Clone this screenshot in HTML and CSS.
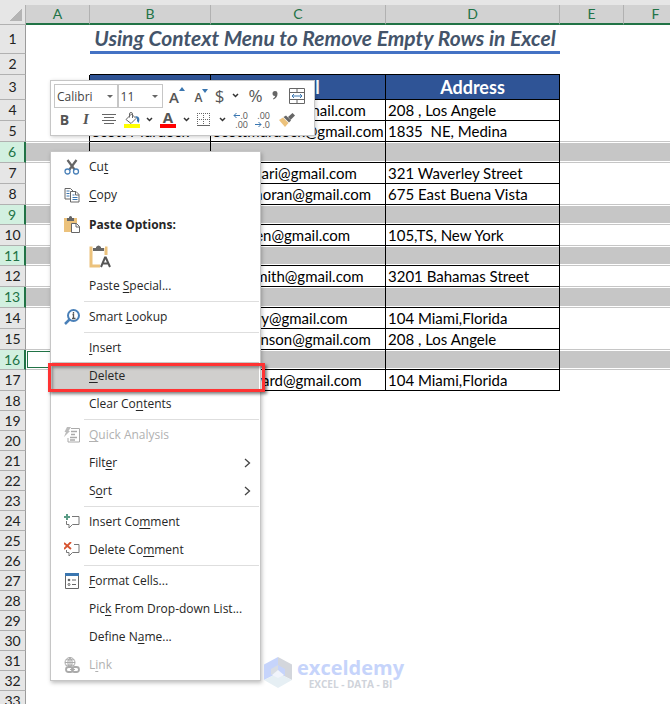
FILE: index.html
```html
<!DOCTYPE html>
<html lang="en">
  <head>
    <meta charset="utf-8">
    <title>Using Context Menu to Remove Empty Rows in Excel</title>
    <link rel="stylesheet" href="styles.css">
  </head>
  <body>
    <table class="sheet">
      <colgroup>
        <col class="col-head"><col class="col-a"><col class="col-b"><col class="col-c">
        <col class="col-d"><col class="col-e"><col class="col-f"><col>
      </colgroup>
      <thead>
        <tr><th class="corner"></th><th>A</th><th>B</th><th>C</th><th>D</th><th>E</th><th>F</th><th></th></tr>
      </thead>
      <tbody>
        <tr class="r29"><th>1</th><td></td><td class="title" colspan="3">Using Context Menu to Remove Empty Rows in Excel</td><td></td><td></td><td></td></tr>
        <tr class="r21 top"><th>2</th><td></td><td></td><td></td><td></td><td></td><td></td><td></td></tr>
        <tr class="r25 data heading"><th>3</th><td></td><td></td><td>Email</td><td>Address</td><td></td><td></td><td></td></tr>
        <tr class="r21 data"><th>4</th><td></td><td></td><td>jacobhallen@gmail.com</td><td>208 , Los Angele</td><td></td><td></td><td></td></tr>
        <tr class="r21 data"><th>5</th><td></td><td>Scott Murdock</td><td>Scottmurdock@gmail.com</td><td>1835&nbsp; NE, Medina</td><td></td><td></td><td></td></tr>
        <tr class="r21 data picked"><th>6</th><td></td><td></td><td></td><td></td><td></td><td></td><td></td></tr>
        <tr class="r21 data"><th>7</th><td></td><td></td><td>alexansari@gmail.com</td><td>321 Waverley Street</td><td></td><td></td><td></td></tr>
        <tr class="r21 data"><th>8</th><td></td><td></td><td>jackiemoran@gmail.com</td><td>675 East Buena Vista</td><td></td><td></td><td></td></tr>
        <tr class="r20 data picked"><th>9</th><td></td><td></td><td></td><td></td><td></td><td></td><td></td></tr>
        <tr class="r21 data"><th>10</th><td></td><td></td><td>timgreen@gmail.com</td><td>105,TS, New York</td><td></td><td></td><td></td></tr>
        <tr class="r20 data picked"><th>11</th><td></td><td></td><td></td><td></td><td></td><td></td><td></td></tr>
        <tr class="r21 data"><th>12</th><td></td><td></td><td>adamsmith@gmail.com</td><td>3201 Bahamas Street</td><td></td><td></td><td></td></tr>
        <tr class="r21 data picked"><th>13</th><td></td><td></td><td></td><td></td><td></td><td></td><td></td></tr>
        <tr class="r21 data"><th>14</th><td></td><td></td><td>hallmary@gmail.com</td><td>104 Miami,Florida</td><td></td><td></td><td></td></tr>
        <tr class="r21 data"><th>15</th><td></td><td></td><td>lukejohnson@gmail.com</td><td>208 , Los Angele</td><td></td><td></td><td></td></tr>
        <tr class="r20 data picked"><th>16</th><td class="active"></td><td></td><td></td><td></td><td></td><td></td><td></td></tr>
        <tr class="r21 data"><th>17</th><td></td><td></td><td>jonhoward@gmail.com</td><td>104 Miami,Florida</td><td></td><td></td><td></td></tr>
        <tr class="r20"><th>18</th><td colspan="7"></td></tr>
        <tr class="r20"><th>19</th><td colspan="7"></td></tr>
        <tr class="r20"><th>20</th><td colspan="7"></td></tr>
        <tr class="r20"><th>21</th><td colspan="7"></td></tr>
        <tr class="r20"><th>22</th><td colspan="7"></td></tr>
        <tr class="r20"><th>23</th><td colspan="7"></td></tr>
        <tr class="r20"><th>24</th><td colspan="7"></td></tr>
        <tr class="r20"><th>25</th><td colspan="7"></td></tr>
        <tr class="r20"><th>26</th><td colspan="7"></td></tr>
        <tr class="r20"><th>27</th><td colspan="7"></td></tr>
        <tr class="r20"><th>28</th><td colspan="7"></td></tr>
        <tr class="r20"><th>29</th><td colspan="7"></td></tr>
        <tr class="r20"><th>30</th><td colspan="7"></td></tr>
        <tr class="r20"><th>31</th><td colspan="7"></td></tr>
        <tr class="r20"><th>32</th><td colspan="7"></td></tr>
        <tr class="r20"><th>33</th><td colspan="7"></td></tr>
      </tbody>
    </table>

    <!-- floating format bar -->
    <div class="toolbar">
      <div class="tools">
        <label class="drop font"><select aria-label="Font"><option>Calibri</option></select></label>
        <label class="drop size"><select aria-label="Font size"><option>11</option></select></label>
        <button class="w28 grow" aria-label="Increase font size">A<svg width="6" height="4"><path d="M0 4L3 0L6 4z" fill="#3a76b0"/></svg></button>
        <button class="w21 shrink" aria-label="Decrease font size">A<svg width="6" height="4"><path d="M0 0H6L3 4z" fill="#3a76b0"/></svg></button>
        <button class="w16 sign">$</button>
        <button class="w16" aria-label="Currency list"><svg width="7" height="5"><path class="chev" d="M1 1l2.500 2.500L6 1"/></svg></button>
        <button class="w24 sign">%</button>
        <button class="w16" aria-label="Comma style"><svg width="6" height="9"><path d="M3 0a2.500 2.500 0 0 1 2.500 2.700C5.500 5.500 4 7.500 1.500 8.500L1 7.500C2.500 6.800 3 6 3 5A2.500 2.500 0 0 1 3 0z" fill="#666"/></svg></button>
        <button class="w28" aria-label="Merge and center"><svg width="16" height="16" fill="none" stroke="#666"><path d="M.5 .5h15v15H.5zM.5 4.500h15M.5 11.500h15M8 .5v4M8 11.500v4"/><path d="M3 8h10M5 6L3 8l2 2M11 6l2 2-2 2" stroke="#3a76b0"/></svg></button>
      </div>
      <div class="tools">
        <button class="w21 bold">B</button>
        <button class="w22 italic">I</button>
        <button class="w24" aria-label="Center"><svg width="14" height="11" stroke="#666"><path d="M0 .5h14M2 3.500h10M0 6.500h14M2 9.500h10"/></svg></button>
        <button class="w22" aria-label="Fill color"><svg width="17" height="16" fill="none"><path d="M2 7.500L7.500 2 12 6.500 7 11.500z" fill="#fff" stroke="#666"/><path d="M5.500 5.500V2Q5.500 .5 7 .5T8.500 2V6" stroke="#666"/><path d="M11 4.500C15 3.500 16.500 7 14.500 11L13 9V6.500z" fill="#3a76b0"/><path d="M0 12h16v4H0z" fill="#ff0"/></svg></button>
        <button class="w13" aria-label="Fill colors"><svg width="7" height="5"><path class="chev" d="M1 1l2.500 2.500L6 1"/></svg></button>
        <button class="fontcolor" aria-label="Font color">A</button>
        <button class="w12" aria-label="Font colors"><svg width="7" height="5"><path class="chev" d="M1 1l2.500 2.500L6 1"/></svg></button>
        <button class="w24" aria-label="Borders"><svg width="14" height="14" fill="none" stroke="#666"><path d="M0 .5h13M0 6.500h13M.5 0v13M6.500 0v13M12.500 0v13" stroke-dasharray="1 1"/><path d="M0 12.500h13"/></svg></button>
        <button class="w13" aria-label="Border list"><svg width="7" height="5"><path class="chev" d="M1 1l2.500 2.500L6 1"/></svg></button>
        <button class="w24 decimal" aria-label="Increase decimal"><span><svg width="7" height="7"><path class="arrow" d="M7 3.500H1M3.500 1L1 3.500 3.500 6"/></svg>.0</span><span>.00</span></button>
        <button class="w22 decimal" aria-label="Decrease decimal"><span>.00</span><span><svg width="7" height="7"><path class="arrow" d="M0 3.500h6M3.500 1L6 3.500 3.500 6"/></svg>.0</span></button>
        <button class="w24" aria-label="Format painter"><svg width="16" height="14"><path d="M0 7L4 4.500 9.500 10 6 14z" fill="#ecc27c"/><path d="M4.500 4L7 2.500l5 5L10 9.500z" fill="#666"/><path d="M9 4l4.500-4L16 2.500 11.500 7z" fill="#666"/></svg></button>
      </div>
    </div>

    <!-- right click menu -->
    <div class="menu" role="menu">
      <button role="menuitem"><svg width="16" height="16" fill="none"><path d="M3.500 1L10.500 10.500M12.500 1L5.500 10.500" stroke="#666" stroke-width="2.200"/><circle cx="3.500" cy="12.500" r="2.500" stroke="#4a80b8" stroke-width="1.300"/><circle cx="12" cy="12.500" r="2.500" stroke="#4a80b8" stroke-width="1.300"/></svg><span>Cu<u>t</u></span></button>
      <button role="menuitem"><svg width="16" height="16" fill="none"><path d="M8 12H1V1.500h5.500L9 4" stroke="#666"/><path d="M2.500 4h3M2.500 6.500h3M2.500 9h3" stroke="#3a76b0"/><path d="M6.500 4.500h5.500l3 3v7.500H6.500z" fill="#fff" stroke="#666"/><path d="M11.500 4.500v3.500H15" stroke="#666"/><path d="M8.500 8h2M8.500 10.500h5M8.500 12.500h5" stroke="#3a76b0"/></svg><span><u>C</u>opy</span></button>
      <div class="caption"><svg width="16" height="17" fill="none"><path d="M0 2h13v14H0z" fill="#ecc27c"/><path d="M3 2h2V1q1.500-2 3 0v1h2v3H3z" fill="#666"/><path d="M7.500 7.500h5l3 3v6h-8z" fill="#fff" stroke="#666"/><path d="M12 7.500v3.500h3.500" stroke="#666"/></svg><span>Paste Options:</span></div>
      <button role="menuitem" class="paste" aria-label="Paste"><svg width="22" height="23" fill="none"><path d="M3.500 3H2v18h9M16 3h1v7" stroke="#ecc27c" stroke-width="3"/><path d="M4 3h3V2q2.500-3 5 0v1h3v3H4z" fill="#666"/><path d="M12 22L16 12.500h.8L21 22M13.500 18.500h6" stroke="#555" stroke-width="2"/></svg></button>
      <button role="menuitem"><i></i><span>Paste <u>S</u>pecial...</span></button>
      <hr>
      <button role="menuitem"><svg width="16" height="16" fill="none"><circle cx="9.500" cy="6.500" r="5.500" stroke="#4a80b8" stroke-width="2"/><path d="M5.500 10.500L1 15" stroke="#4a80b8" stroke-width="2.500"/><path d="M9.500 3v1.500M8.500 5.500h1V9M8 9.500h3.500" stroke="#555" stroke-width="1.300"/></svg><span>Smart <u>L</u>ookup</span></button>
      <hr>
      <button role="menuitem"><i></i><span><u>I</u>nsert</span></button>
      <button role="menuitem" class="hover"><i></i><span><u>D</u>elete</span></button>
      <button role="menuitem"><i></i><span>Clear Co<u>n</u>tents</span></button>
      <hr>
      <button role="menuitem" disabled><svg width="16" height="16" fill="none" stroke="#aaa"><path d="M7 1.500h8.500V15H4v-4"/><path d="M7 4.500h6M7 7.500h4M6 10.500h7M6 13h5" stroke-width="1.500"/><path d="M3 0h4L4.500 4H6L0 10l2-5H.5z" fill="#bbb" stroke="none"/></svg><span><u>Q</u>uick Analysis</span></button>
      <button role="menuitem"><i></i><span>Filt<u>e</u>r</span><svg width="7" height="10"><path class="more" d="M1 1l4.500 4L1 9"/></svg></button>
      <button role="menuitem"><i></i><span>S<u>o</u>rt</span><svg width="7" height="10"><path class="more" d="M1 1l4.500 4L1 9"/></svg></button>
      <hr>
      <button role="menuitem"><svg width="16" height="16" fill="none"><path d="M8 2.500h7v8H8.500L5 14v-3.500H2.500V7" stroke="#777"/><path d="M3 0v6M0 3h6" stroke="#5a9c86" stroke-width="2"/></svg><span>Insert Co<u>m</u>ment</span></button>
      <button role="menuitem"><svg width="16" height="16" fill="none"><path d="M10 2.500h5v8H8.500L5 14v-3.500H2.500V8" stroke="#777"/><path d="M0 1l7 6M7 0L0 7" stroke="#d6532f" stroke-width="1.800"/></svg><span>Delete Co<u>m</u>ment</span></button>
      <hr>
      <button role="menuitem"><svg width="16" height="16" fill="none"><path d="M1.500 .5h13v15h-13z" stroke="#666"/><path d="M1 0h14v3H1z" fill="#3a76b0"/><circle cx="5" cy="7" r="1.300" fill="#666"/><circle cx="5" cy="11.500" r="1" stroke="#666"/><path d="M8 7h4M8 11.500h4" stroke="#666"/></svg><span><u>F</u>ormat Cells...</span></button>
      <button role="menuitem"><i></i><span>Pic<u>k</u> From Drop-down List...</span></button>
      <button role="menuitem"><i></i><span>Define N<u>a</u>me...</span></button>
      <button role="menuitem" disabled><svg width="16" height="16" fill="none" stroke="#aaa"><circle cx="6" cy="5.500" r="5"/><path d="M1 5.500h10M2 2.800h8M2 8.200h8M6 .5v10M6 .5q-4.500 5 0 10M6 .5q4.500 5 0 10"/><path d="M1 9h15v7H1z" fill="#fff" stroke="none"/><rect x="2" y="10" width="7" height="5" rx="2.500" stroke-width="1.800"/><rect x="8" y="10" width="7" height="5" rx="2.500" stroke-width="1.800"/><path d="M6 12.500h5"/></svg><span>L<u>i</u>nk</span></button>
    </div>

    <div class="marker"></div>

    <div class="brand">
      <svg width="28" height="32"><path d="M14 0L28 7.500V23L14 16z" fill="#d3d6dc"/><path d="M14 0L0 7.500V23l14-7z" fill="#c6d4fb"/><path d="M0 23l14-7 14 7-14 8z" fill="#e6eff4"/><path d="M14 8l7 4v7l-7-3z" fill="#c6d4fb"/><path d="M14 8l-7 4v6l7-3z" fill="#d9dde3"/><path d="M8 18l6-5 6 5-6 3z" fill="#f1f4fb"/></svg>
      <div>
        <b>exceldemy</b>
        <small>EXCEL - DATA - BI</small>
      </div>
    </div>
  </body>
</html>
```
FILE: styles.css
```css
* {
  box-sizing: border-box;
}
body {
  margin: 0;
  padding-top: 5px;
  height: 100vh;
  overflow: hidden;
  position: relative;
  background: linear-gradient(#e6e6e6 5px, #fff 5px);
  font-family: Lato, "Liberation Sans", sans-serif;
  font-variant-ligatures: none;
}

/* worksheet */
.sheet {
  width: 100%;
  min-width: 688px;
  table-layout: fixed;
  border-spacing: 0;
  font-size: 15px;
  line-height: 18px;
}
.col-head { width: 26px; }
.col-a { width: 64px; }
.col-b { width: 121px; }
.col-c { width: 175px; }
.col-d { width: 174px; }
.col-e { width: 64px; }
.col-f { width: 64px; }
th, td {
  padding: 0;
  white-space: nowrap;
  overflow: hidden;
}
thead th {
  height: 20px;
  background: #d2d2d2;
  border-right: 1px solid #b1b1b1;
  border-bottom: 2px solid #217346;
  color: #217346;
  font-size: 14px;
  font-weight: normal;
}
thead .corner {
  background: linear-gradient(135deg, transparent 50%, #b4b4b4 50%) 10px 4px / 12px 12px no-repeat #e6e6e6;
  border-bottom: 1px solid #b1b1b1;
}
tbody th {
  background: #e6e6e6;
  border-right: 1px solid #9b9b9b;
  border-bottom: 1px solid #b1b1b1;
  color: #222;
  font-size: 14px;
  font-weight: normal;
}
.r20 { height: 20px; }
.r21 { height: 21px; }
.r25 { height: 25px; }
.r29 { height: 29px; }
.title {
  border-bottom: 3px solid #4472c4;
  color: #44546a;
  font-size: 21px;
  font-weight: bold;
  font-style: italic;
  line-height: 24px;
  text-align: center;
}
.top td:nth-child(n+3):nth-child(-n+5) {
  border-bottom: 1px solid #000;
}
.data td:nth-child(2) {
  border-right: 1px solid #000;
}
.data td:nth-child(n+3):nth-child(-n+5) {
  padding-left: 2px;
  border-right: 1px solid #000;
  border-bottom: 1px solid #000;
}
.heading td:nth-child(n+3):nth-child(-n+5) {
  padding: 0;
  background: #2f5496;
  color: #fff;
  font-size: 18px;
  font-weight: bold;
  text-align: center;
}
.data:has(+ .picked) td,
.picked td {
  border-bottom: 1px solid #c6c6c6;
}
.picked td {
  background: #c6c6c6;
  box-shadow: inset 0 1px #fff, inset 0 -1px #fff;
}
.picked th {
  background: #d2f0e0;
  border-right: 2px solid #217346;
  color: #217346;
}
.picked .active {
  background: #fff;
  box-shadow: inset 0 0 0 1px #fff, inset 0 0 0 2px #217346;
}

/* floating format bar */
button {
  padding: 0;
  border: 0;
  background: none;
  color: #555;
  font: 12px "Open Sans", sans-serif;
}
.toolbar {
  position: absolute;
  left: 50px;
  top: 80px;
  width: 265px;
  height: 56px;
  padding: 3px;
  background: #fff;
  border: 1px solid #c6c6c6;
  box-shadow: 1px 1px 4px rgba(0, 0, 0, .2);
}
.tools {
  display: flex;
  height: 24px;
}
.tools button {
  display: flex;
  align-items: center;
  justify-content: center;
  padding-bottom: 1px;
}
.w12 { width: 12px; }
.w13 { width: 13px; }
.w16 { width: 16px; }
.w21 { width: 21px; }
.w22 { width: 22px; }
.w24 { width: 24px; }
.w28 { width: 28px; }
.drop {
  position: relative;
  border: 1px solid #c6c6c6;
}
.drop::after {
  content: "";
  position: absolute;
  right: 4px;
  top: 10px;
  border: 3px solid transparent;
  border-top-color: #666;
}
.font { width: 64px; }
.size { width: 46px; }
.drop select {
  appearance: none;
  width: 100%;
  height: 20px;
  padding: 0 2px;
  border: 0;
  background: none;
  color: #444;
  font: 12px "Open Sans", sans-serif;
}
.tools .grow,
.tools .shrink {
  align-items: flex-start;
  padding-top: 3px;
  font-size: 15px;
  font-weight: 600;
}
.tools .shrink {
  padding-top: 5px;
  font-size: 12px;
}
.tools .sign {
  font-size: 17px;
}
.bold {
  font-size: 14px;
  font-weight: bold;
}
.italic {
  font: italic bold 15px "Liberation Serif", serif;
}
.tools .fontcolor {
  width: 16px;
  height: 18px;
  margin: 2px 4px;
  border-bottom: 4px solid #f00;
  font-size: 15px;
  font-weight: bold;
  line-height: 14px;
}
.tools .decimal {
  flex-direction: column;
  align-items: flex-end;
  padding-right: 5px;
  font-size: 9px;
  line-height: 9px;
}
.arrow {
  fill: none;
  stroke: #3a76b0;
}
.chev {
  fill: none;
  stroke: #333;
  stroke-width: 1.500;
}

/* right click menu */
.menu {
  position: absolute;
  left: 50px;
  top: 151px;
  width: 211px;
  padding: 1px;
  background: #fff;
  border: 1px solid #c6c6c6;
  box-shadow: 1px 2px 4px rgba(0, 0, 0, .25);
}
.menu button,
.caption {
  display: flex;
  align-items: center;
  width: 100%;
  height: 28px;
  padding: 0 8px 0 12px;
  gap: 9px;
  color: #262626;
  line-height: 16px;
  text-align: left;
}
.menu svg,
.menu i {
  flex: none;
}
.menu i {
  width: 16px;
}
.menu span {
  flex: 1;
}
.menu u {
  text-underline-offset: 2px;
}
.menu .caption {
  height: 31px;
  font: bold 12px/16px "Open Sans", sans-serif;
}
.menu .paste {
  height: 32px;
  padding-left: 37px;
}
.menu button:disabled {
  color: #b1b1b1;
}
.menu .hover {
  background: #d0cfcd;
}
.menu hr {
  height: 1px;
  margin: 1px 0 1px 32px;
  border: 0;
  background: #dedede;
}
.more {
  fill: none;
  stroke: #444;
  stroke-width: 1.300;
}
.marker {
  position: absolute;
  left: 48px;
  top: 363px;
  width: 217px;
  height: 29px;
  border: 3px solid #f33;
  box-shadow: 2px 2px 3px rgba(0, 0, 0, .5), inset 2px 2px 3px rgba(0, 0, 0, .35);
  pointer-events: none;
}

/* watermark over the cells */
.brand {
  position: absolute;
  left: 264px;
  top: 657px;
  display: flex;
  gap: 5px;
  color: #c6d4fb;
}
.brand b {
  display: block;
  font: bold 20px/22px "Open Sans", sans-serif;
}
.brand small {
  display: block;
  color: #cfd3da;
  font: bold 10px/10px "Open Sans", sans-serif;
  text-align: center;
}
```
